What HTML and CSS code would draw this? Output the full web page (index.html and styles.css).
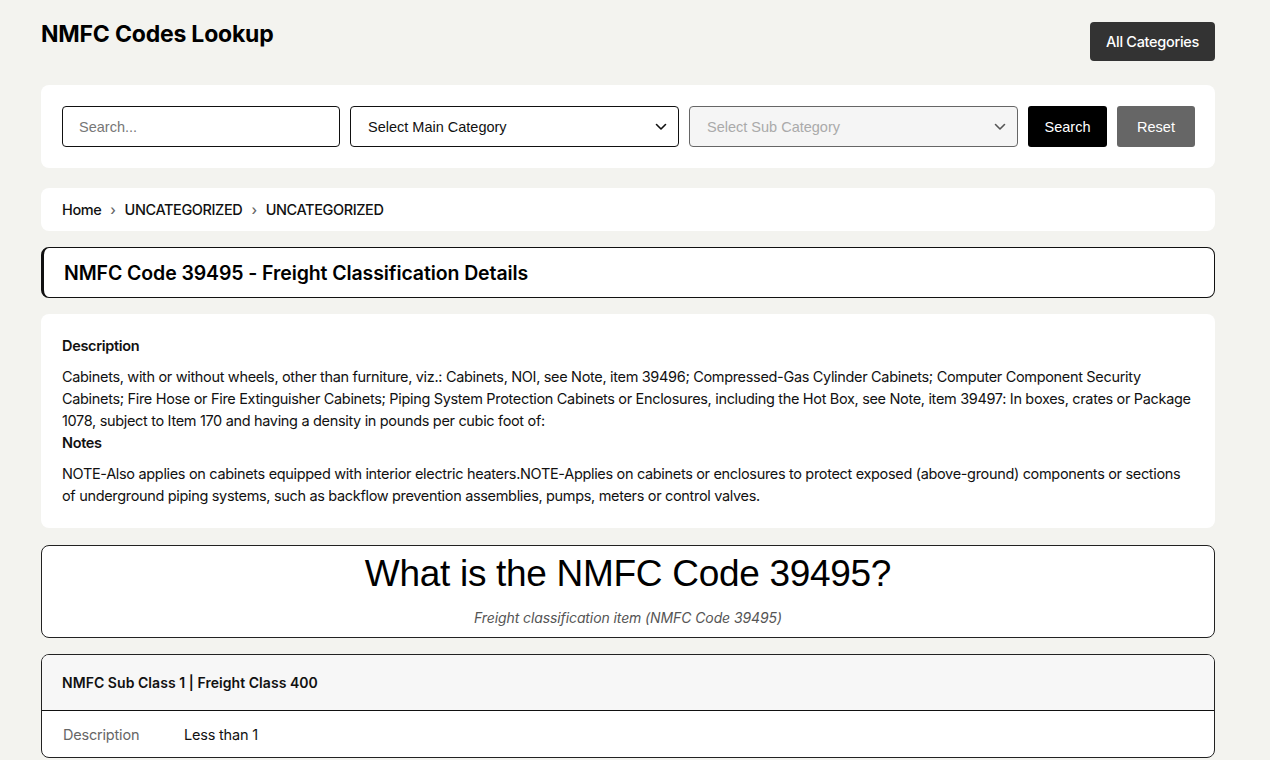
FILE: index.html
```html
<!DOCTYPE html>
<html lang="en">
<head>
<meta charset="utf-8">
<title>NMFC Codes Lookup</title>
<link rel="stylesheet" href="styles.css">
</head>
<body>
<div class="page">
  <header class="header">
    <h1 class="site-title">NMFC Codes Lookup</h1>
    <a class="btn-all" href="#">All Categories</a>
  </header>

  <section class="card search-card">
    <input class="field search-input" type="text" placeholder="Search...">
    <div class="field select-field">
      <span>Select Main Category</span>
      <svg class="chev" width="12" height="8" viewBox="0 0 12 8"><path d="M1.5 1.5 L6 6 L10.5 1.5" fill="none" stroke="#111" stroke-width="1.6" stroke-linecap="round" stroke-linejoin="round"/></svg>
    </div>
    <div class="field select-field disabled">
      <span>Select Sub Category</span>
      <svg class="chev" width="12" height="8" viewBox="0 0 12 8"><path d="M1.5 1.5 L6 6 L10.5 1.5" fill="none" stroke="#555" stroke-width="1.6" stroke-linecap="round" stroke-linejoin="round"/></svg>
    </div>
    <button class="btn btn-search">Search</button>
    <button class="btn btn-reset">Reset</button>
  </section>

  <nav class="card breadcrumb">
    <a href="#">Home</a><span class="sep">›</span><a href="#">UNCATEGORIZED</a><span class="sep">›</span><a href="#">UNCATEGORIZED</a>
  </nav>

  <section class="title-card">
    <h2>NMFC Code 39495 - Freight Classification Details</h2>
  </section>

  <section class="card details">
    <h3>Description</h3>
    <p>Cabinets, with or without wheels, other than furniture, viz.: Cabinets, NOI, see Note, item 39496; Compressed-Gas Cylinder Cabinets; Computer Component Security Cabinets; Fire Hose or Fire Extinguisher Cabinets; Piping System Protection Cabinets or Enclosures, including the Hot Box, see Note, item 39497: In boxes, crates or Package 1078, subject to Item 170 and having a density in pounds per cubic foot of:</p>
    <h3 class="notes-h">Notes</h3>
    <p>NOTE-Also applies on cabinets equipped with interior electric heaters.NOTE-Applies on cabinets or enclosures to protect exposed (above-ground) components or sections of underground piping systems, such as backflow prevention assemblies, pumps, meters or control valves.</p>
  </section>

  <section class="what-card">
    <h2>What is the NMFC Code 39495?</h2>
    <p>Freight classification item (NMFC Code 39495)</p>
  </section>

  <section class="class-card">
    <div class="class-head">NMFC Sub Class 1 | Freight Class 400</div>
    <div class="class-row">
      <span class="label">Description</span>
      <span class="value">Less than 1</span>
    </div>
  </section>
</div>
</body>
</html>
```

FILE: styles.css
```css
* { box-sizing: border-box; }
html, body { margin: 0; padding: 0; }
body {
  background: #f3f3ef;
  font-family: Inter, "Noto Sans", Arial, sans-serif;
  color: #111;
}
.page {
  width: 1174px;
  margin-left: 41px;
}
.header {
  display: flex;
  justify-content: space-between;
  align-items: flex-start;
  padding-top: 22px;
  height: 85px;
}
.site-title {
  margin: 0;
  font-size: 23px;
  font-weight: 700;
  line-height: 24px;
  letter-spacing: -0.2px;
  color: #000;
}
.btn-all {
  display: flex;
  align-items: center;
  height: 39px;
  padding: 0 16px;
  background: #333;
  color: #fff;
  border-radius: 4px;
  text-decoration: none;
  font-size: 14.5px;
  font-weight: 500;
  letter-spacing: -0.3px;
}
.card {
  background: #fff;
  border-radius: 8px;
}
.search-card {
  display: flex;
  gap: 10px;
  padding: 21px;
  height: 83px;
}
.field {
  flex: none;
  height: 41px;
  border: 1px solid #111;
  border-radius: 4px;
  font-family: "Liberation Sans", Arial, sans-serif;
  font-size: 14.5px;
  background: #fff;
}
.search-input {
  width: 278px;
  padding: 0 16px;
  color: #111;
  outline: none;
}
.search-input::placeholder { color: #777; }
.select-field {
  width: 329px;
  display: flex;
  align-items: center;
  justify-content: space-between;
  padding: 0 11px 0 17px;
  color: #111;
}
.select-field.disabled {
  background: #f5f5f5;
  border-color: #666;
  color: #aaa;
}
.btn {
  flex: none;
  height: 41px;
  border: none;
  border-radius: 3px;
  color: #fff;
  font-family: "Liberation Sans", Arial, sans-serif;
  font-size: 14.5px;
  padding: 0;
}
.btn-search { width: 79px; background: #000; }
.btn-reset { width: 78px; background: #666; }

.breadcrumb {
  margin-top: 20px;
  height: 43px;
  display: flex;
  align-items: center;
  padding: 0 21px;
  font-size: 14.5px;
  font-weight: 500;
  letter-spacing: -0.4px;
}
.breadcrumb a { color: #111; text-decoration: none; }
.breadcrumb .sep { color: #666; margin: 0 9px; font-size: 14px; }

.title-card {
  margin-top: 16px;
  height: 51px;
  background: #fff;
  border: 1px solid #111;
  border-left-width: 3px;
  border-radius: 8px;
  display: flex;
  align-items: center;
  padding-left: 20px;
}
.title-card h2 {
  margin: 0;
  font-size: 19.5px;
  font-weight: 600;
  letter-spacing: -0.1px;
  color: #000;
}

.details {
  margin-top: 16px;
  padding: 21px 21px 21px;
  font-size: 14.5px;
  line-height: 22px;
  letter-spacing: -0.33px;
}
.details h3 {
  margin: 0 0 9px;
  font-size: 14.5px;
  font-weight: 600;
  line-height: 22px;
}
.details h3.notes-h { margin-bottom: 9px; }
.details p { margin: 0; }

.what-card {
  margin-top: 17px;
  background: #fff;
  border: 1px solid #222;
  border-radius: 8px;
  text-align: center;
  padding: 6px 0 9px;
}
.what-card h2 {
  margin: 0;
  font-family: "Liberation Sans", Arial, sans-serif;
  font-weight: 400;
  font-size: 37px;
  line-height: 44px;
  letter-spacing: -0.3px;
  color: #000;
}
.what-card p {
  margin: 12px 0 0;
  font-style: italic;
  font-size: 14px;
  color: #555;
  line-height: 20px;
  letter-spacing: -0.1px;
}

.class-card {
  margin-top: 16px;
  border: 1px solid #222;
  border-radius: 8px;
  background: #fff;
  overflow: hidden;
}
.class-head {
  background: #f7f7f7;
  height: 56px;
  display: flex;
  align-items: center;
  padding-left: 20px;
  font-size: 14px;
  font-weight: 600;
  letter-spacing: 0.05px;
  border-bottom: 1px solid #111;
}
.class-row {
  display: flex;
  align-items: center;
  height: 46px;
  padding-left: 21px;
  font-size: 14.5px;
  letter-spacing: -0.2px;
}
.class-row .label { width: 121px; color: #666; }
.class-row .value { color: #111; }
```
